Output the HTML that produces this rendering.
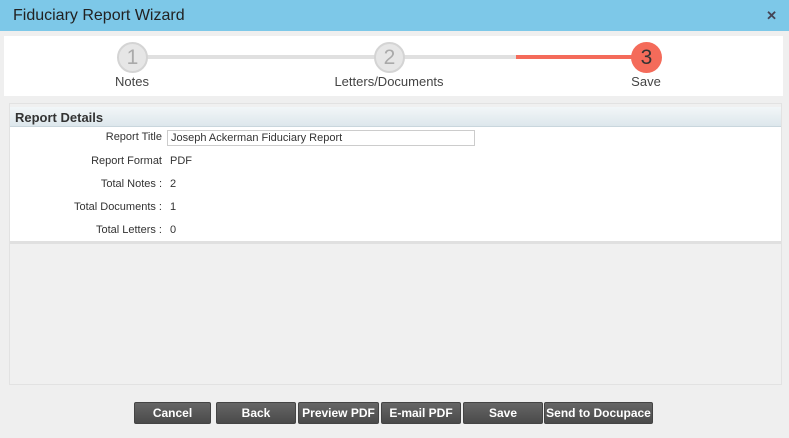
<!DOCTYPE html>
<html><head><style>
*{margin:0;padding:0;box-sizing:border-box}
body{width:789px;height:438px;background:#efefef;font-family:"Liberation Sans",sans-serif;position:relative;overflow:hidden;color:#333}
.tb{position:absolute;left:0;top:0;width:789px;height:31px;background:#7dc8e8;font-size:16px;color:#222;padding:7px 0 0 13px}
.x{position:absolute;right:12px;top:8px;font-size:13px;font-weight:bold;color:#445}
.steps{position:absolute;left:4px;top:36px;width:779px;height:60px;background:#fff}
.line{position:absolute;top:55px;height:4px}
.c{position:absolute;width:31px;height:31px;border-radius:50%;top:42px;text-align:center;font-size:21px;line-height:31px}
.g{background:#e6e6e6;border:2px solid #d4d4d4;color:#aaa;line-height:27px}
.r{background:#f46b5a;color:#333}
.lb{position:absolute;top:74px;font-size:13px;color:#444;transform:translateX(-50%)}
.panel{position:absolute;left:9px;top:103px;width:773px;height:282px;border:1px solid #e2e2e2;background:#f0f0f0}
.hd{position:absolute;left:0;top:3px;width:771px;height:20px;background:linear-gradient(#f2f6f8,#dde7ec);border-bottom:1px solid #c9d6dd;font-weight:bold;font-size:13px;padding:3px 0 0 5px;color:#333}
.ct{position:absolute;left:0;top:23px;width:771px;height:117px;background:#fff;border-bottom:3px solid #e0e0e0}
.row{position:absolute;left:0;width:771px;font-size:11px}
.row .l{position:absolute;right:619px;text-align:right;white-space:nowrap}
.row .v{position:absolute;left:160px}
.inp{position:absolute;left:157px;top:2px;width:308px;height:16px;border:1px solid #ccc;font-size:11px;padding:1px 3px}
.btn{position:absolute;top:402px;height:22px;background:linear-gradient(#666,#4a4a4a);border:1px solid #444;border-radius:2px;color:#fff;font-weight:bold;font-size:12px;text-align:center;line-height:20px;white-space:nowrap}
</style></head><body>
<div class="tb">Fiduciary Report Wizard<span class="x">✕</span></div>
<div class="steps"></div>
<div class="line" style="left:132px;width:384px;background:#e0e0e0"></div>
<div class="line" style="left:516px;width:130px;background:#f46b5a"></div>
<div class="c g" style="left:117px">1</div>
<div class="c g" style="left:374px">2</div>
<div class="c r" style="left:631px">3</div>
<div class="lb" style="left:132px">Notes</div>
<div class="lb" style="left:389px">Letters/Documents</div>
<div class="lb" style="left:646px">Save</div>
<div class="panel">
<div class="hd">Report Details</div>
<div class="ct">
<div class="row" style="top:1px"><span class="l" style="top:3px">Report Title</span><div class="inp">Joseph Ackerman Fiduciary Report</div></div>
<div class="row" style="top:28px"><span class="l">Report Format</span><span class="v">PDF</span></div>
<div class="row" style="top:51px"><span class="l">Total Notes :</span><span class="v">2</span></div>
<div class="row" style="top:74px"><span class="l">Total Documents :</span><span class="v">1</span></div>
<div class="row" style="top:97px"><span class="l">Total Letters :</span><span class="v">0</span></div>
</div>
</div>
<div class="btn" style="left:134px;width:77px">Cancel</div>
<div class="btn" style="left:216px;width:80px">Back</div>
<div class="btn" style="left:298px;width:81px">Preview PDF</div>
<div class="btn" style="left:381px;width:80px">E-mail PDF</div>
<div class="btn" style="left:463px;width:80px">Save</div>
<div class="btn" style="left:544px;width:109px">Send to Docupace</div>
</body></html>
